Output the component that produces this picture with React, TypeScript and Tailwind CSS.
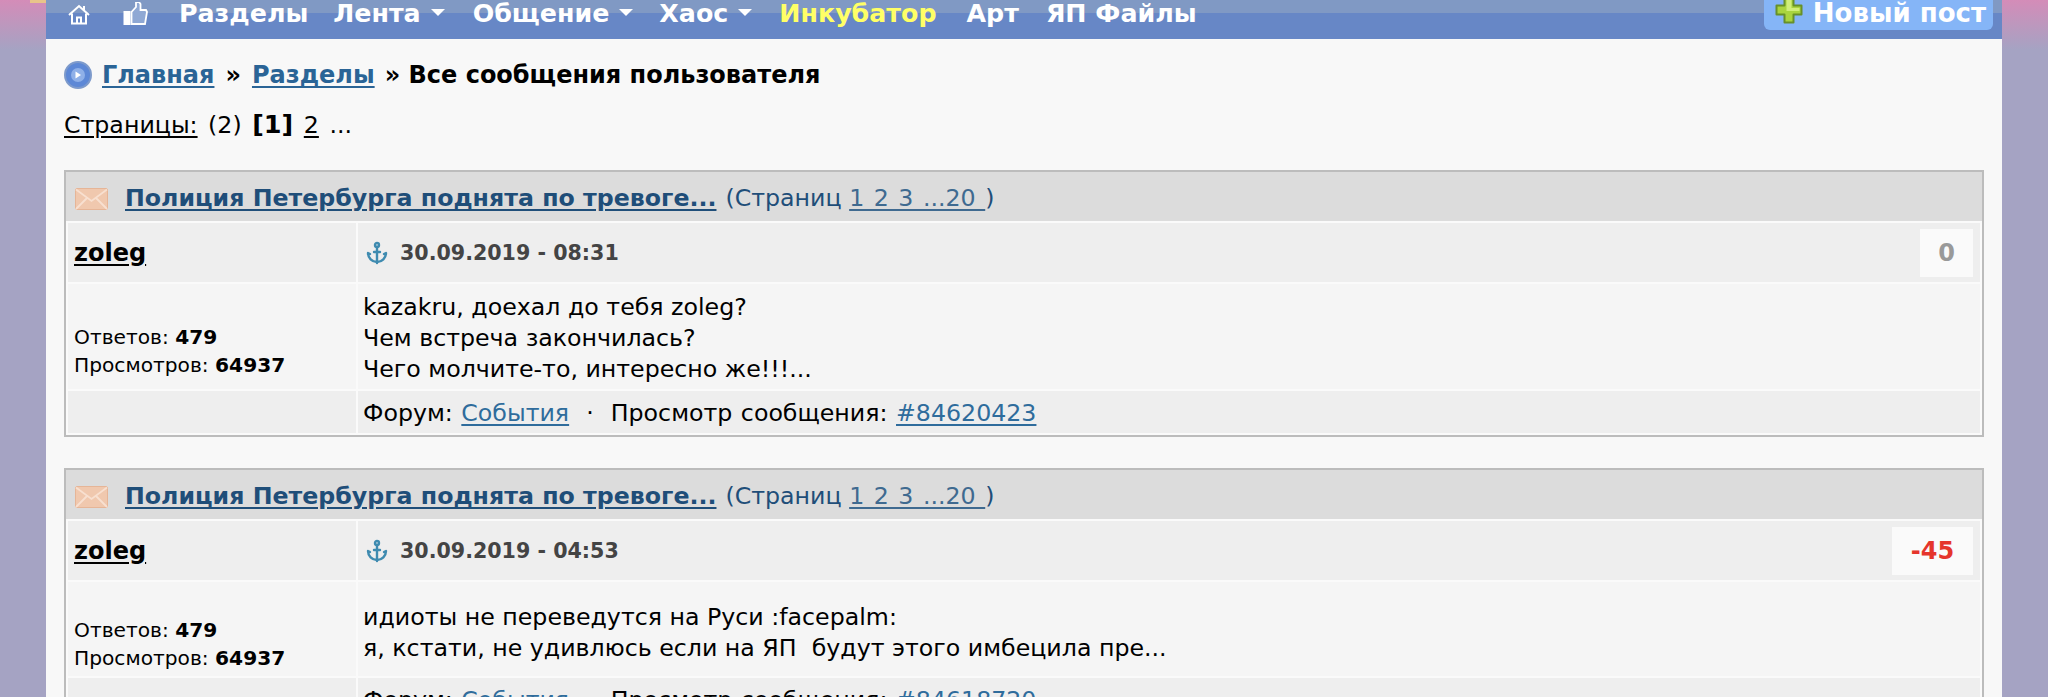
import { Anchor } from "lucide-react";

const font = "font-['DejaVu_Sans',sans-serif]";

const posts = [
  {
    time: "30.09.2019 - 08:31",
    score: "0",
    scoreClass: "text-[#999999] w-[53px]",
    lines: ["kazakru, доехал до тебя zoleg?", "Чем встреча закончилась?", "Чего молчите-то, интересно же!!!..."],
    id: "#84620423",
    bodyClass: "h-[105px]",
    statsClass: "pb-[10px]",
    textClass: "pt-[4px]",
  },
  {
    time: "30.09.2019 - 04:53",
    score: "-45",
    scoreClass: "text-[#e5352c] w-[81px]",
    lines: ["идиоты не переведутся на Руси :facepalm:", "я, кстати, не удивлюсь если на ЯП  будут этого имбецила пре..."],
    id: "#84618720",
    bodyClass: "h-[94px]",
    statsClass: "pb-[4px]",
    textClass: "pt-[8px]",
  },
];

function HomeIcon() {
  return (
    <svg width="22" height="21" viewBox="0 0 22 21" fill="none" stroke="white" strokeWidth="2">
      <path d="M1 11 11 2l10 9" />
      <path d="M4 9.5V19.5h14V9.5" />
      <path d="M9 19.5v-6h4v6" />
      <path d="M16 2v4.5" />
    </svg>
  );
}

function ThumbIcon() {
  return (
    <svg width="25" height="24" viewBox="0 0 25 24">
      <rect x="0.5" y="9" width="7" height="14" fill="white" />
      <path d="M8.5 10 13 5V0h3l1.5 2v6h5.5l1 2-2 12H8.5z" fill="#8fa8d4" stroke="white" strokeWidth="1.8" />
    </svg>
  );
}

function PlayIcon() {
  return (
    <div className="flex h-[28px] w-[28px] items-center justify-center rounded-full border-2 border-[#7d9acb] bg-[#5d88d6]">
      <div className="flex h-[14px] w-[14px] items-center justify-center rounded-full bg-[#8fb0e8]">
        <svg width="8" height="8" viewBox="0 0 8 8">
          <path d="M1.5 0.5 7 4 1.5 7.5z" fill="white" />
        </svg>
      </div>
    </div>
  );
}

function MailIcon() {
  return (
    <svg width="33" height="22" viewBox="0 0 33 22">
      <rect x="0.5" y="0.5" width="32" height="21" rx="1.5" fill="#f0c8ae" stroke="#e6b597" />
      <path d="M1 1.5 16.5 13 32 1.5M1 21 12 10M32 21 21 10" fill="none" stroke="#f8e0d0" strokeWidth="1.8" />
    </svg>
  );
}

function PlusIcon() {
  return (
    <svg width="28" height="28" viewBox="0 0 28 28" className="mb-[6px] shrink-0">
      <path d="M9.5 1.5h9v8h8v9h-8v8h-9v-8h-8v-9h8z" fill="#a9d43f" stroke="#67902a" strokeWidth="2" strokeLinejoin="round" />
      <path d="M11.5 4h5v8h8v3h-13z" fill="#d0ee7a" />
    </svg>
  );
}

function Caret() {
  return <span className="mb-[3px] ml-[10px] inline-block h-0 w-0 border-x-[7px] border-t-[7px] border-x-transparent border-t-white" />;
}

function Post({ post }: { post: (typeof posts)[number] }) {
  return (
    <div className="border-2 border-[#bcbcbc] bg-[#fafafa]">
      <div className="flex h-[49px] items-center bg-[#dcdcdc] pt-[5px] pl-[9px] text-[23.7px] text-[#1f4e79]">
        <MailIcon />
        <a className="ml-[17px] font-bold underline underline-offset-[3px]">Полиция Петербурга поднята по тревоге...</a>
        <span className="ml-[9px]">
          (Страниц <a className="text-[#3f6a90] underline underline-offset-[3px] [word-spacing:2px]">1 2 3 ...20 </a>)
        </span>
      </div>
      <div className="grid grid-cols-[288px_1fr] gap-[2px] p-[2px]">
        <div className="flex h-[59px] items-center bg-[#eeeeee] px-[6px] pt-[1px] text-[24px] font-bold text-black underline underline-offset-[3px]">
          zoleg
        </div>
        <div className="flex h-[59px] items-center justify-between bg-[#eeeeee] pr-[7px] pl-[7px]">
          <div className="flex items-center pt-[2px] text-[20.6px] font-bold text-[#444444]">
            <Anchor size={24} strokeWidth={2.4} className="text-[#3f8bb0]" />
            <span className="ml-[11px]">{post.time}</span>
          </div>
          <div className={`flex h-[48px] items-center justify-center bg-[#fafafa] pt-[1px] text-[24px] font-bold ${post.scoreClass}`}>
            {post.score}
          </div>
        </div>
        <div className={`flex flex-col justify-end bg-[#f5f5f5] px-[6px] text-[20.2px] leading-[28px] text-black ${post.bodyClass} ${post.statsClass}`}>
          <div>
            Ответов: <b>479</b>
          </div>
          <div>
            Просмотров: <b>64937</b>
          </div>
        </div>
        <div className={`flex flex-col justify-center bg-[#f5f5f5] px-[5px] text-[23.7px] leading-[31px] text-black ${post.bodyClass} ${post.textClass}`}>
          {post.lines.map((line) => (
            <div key={line} className="whitespace-pre">
              {line}
            </div>
          ))}
        </div>
        <div className="h-[42px] bg-[#eeeeee]" />
        <div className="flex h-[42px] items-center bg-[#eeeeee] px-[5px] pt-[4px] text-[23.7px] whitespace-pre text-black [word-spacing:1px]">
          Форум: <a className="text-[#2f6c9c] underline underline-offset-[3px]">События</a>  ·  Просмотр сообщения:{" "}
          <a className="text-[#2f6c9c] underline underline-offset-[3px]">{post.id}</a>
        </div>
      </div>
    </div>
  );
}

export default function App() {
  return (
    <div className={`relative h-[697px] overflow-hidden bg-[linear-gradient(#d48cb8_0,#a5a3c3_50px)] px-[46px] ${font}`}>
      <div className="absolute top-0 left-[30px] h-[3px] w-[16px] bg-[#e8c48a]" />
      <div className="relative h-[697px] bg-[#f8f8f8]">
        {/* Nav */}
        <div className="relative flex h-[39px] items-center overflow-hidden bg-[linear-gradient(#8099c4_0,#8099c4_13px,#6787c6_13px)] pb-[11px] text-[25.3px] leading-[26px] font-bold text-white">
          <div className="ml-[22px]">
            <HomeIcon />
          </div>
          <div className="ml-[33px]">
            <ThumbIcon />
          </div>
          <span className="ml-[31px]">Разделы</span>
          <span className="ml-[25px] flex items-center">
            Лента
            <Caret />
          </span>
          <span className="ml-[28px] flex items-center">
            Общение
            <Caret />
          </span>
          <span className="ml-[26px] flex items-center">
            Хаос
            <Caret />
          </span>
          <span className="ml-[27px] text-[#ffff66]">Инкубатор</span>
          <span className="ml-[30px]">Арт</span>
          <span className="ml-[27px]">ЯП Файлы</span>
          <div className="absolute top-0 right-[9px] flex h-[30px] items-center gap-[10px] rounded-b-[6px] bg-[#85b5f7] pr-[7px] pb-[4px] pl-[11px] text-[26px]">
            <PlusIcon />
            <span>Новый пост</span>
          </div>
        </div>

        <div className="px-[18px]">
          {/* Breadcrumb */}
          <div className="mt-[22px] flex items-center text-[24px] leading-[28px] font-bold text-black">
            <PlayIcon />
            <a className="ml-[10px] text-[#2a6496] underline underline-offset-[3px]">Главная</a>
            <span className="ml-[11px]">»</span>
            <a className="ml-[11px] text-[#2a6496] underline underline-offset-[3px]">Разделы</a>
            <span className="ml-[10px]">» Все сообщения пользователя</span>
          </div>

          {/* Pages */}
          <div className="mt-[21px] text-[23.7px] leading-[28px] text-black [word-spacing:3px]">
            <a className="underline underline-offset-[3px]">Страницы:</a> (2) <b className="text-[25.5px]">[1]</b>{" "}
            <a className="underline underline-offset-[3px]">2</a> ...
          </div>

          <div className="mt-[31px] flex flex-col gap-[31px]">
            {posts.map((post) => (
              <Post key={post.id} post={post} />
            ))}
          </div>
        </div>
      </div>
    </div>
  );
}
